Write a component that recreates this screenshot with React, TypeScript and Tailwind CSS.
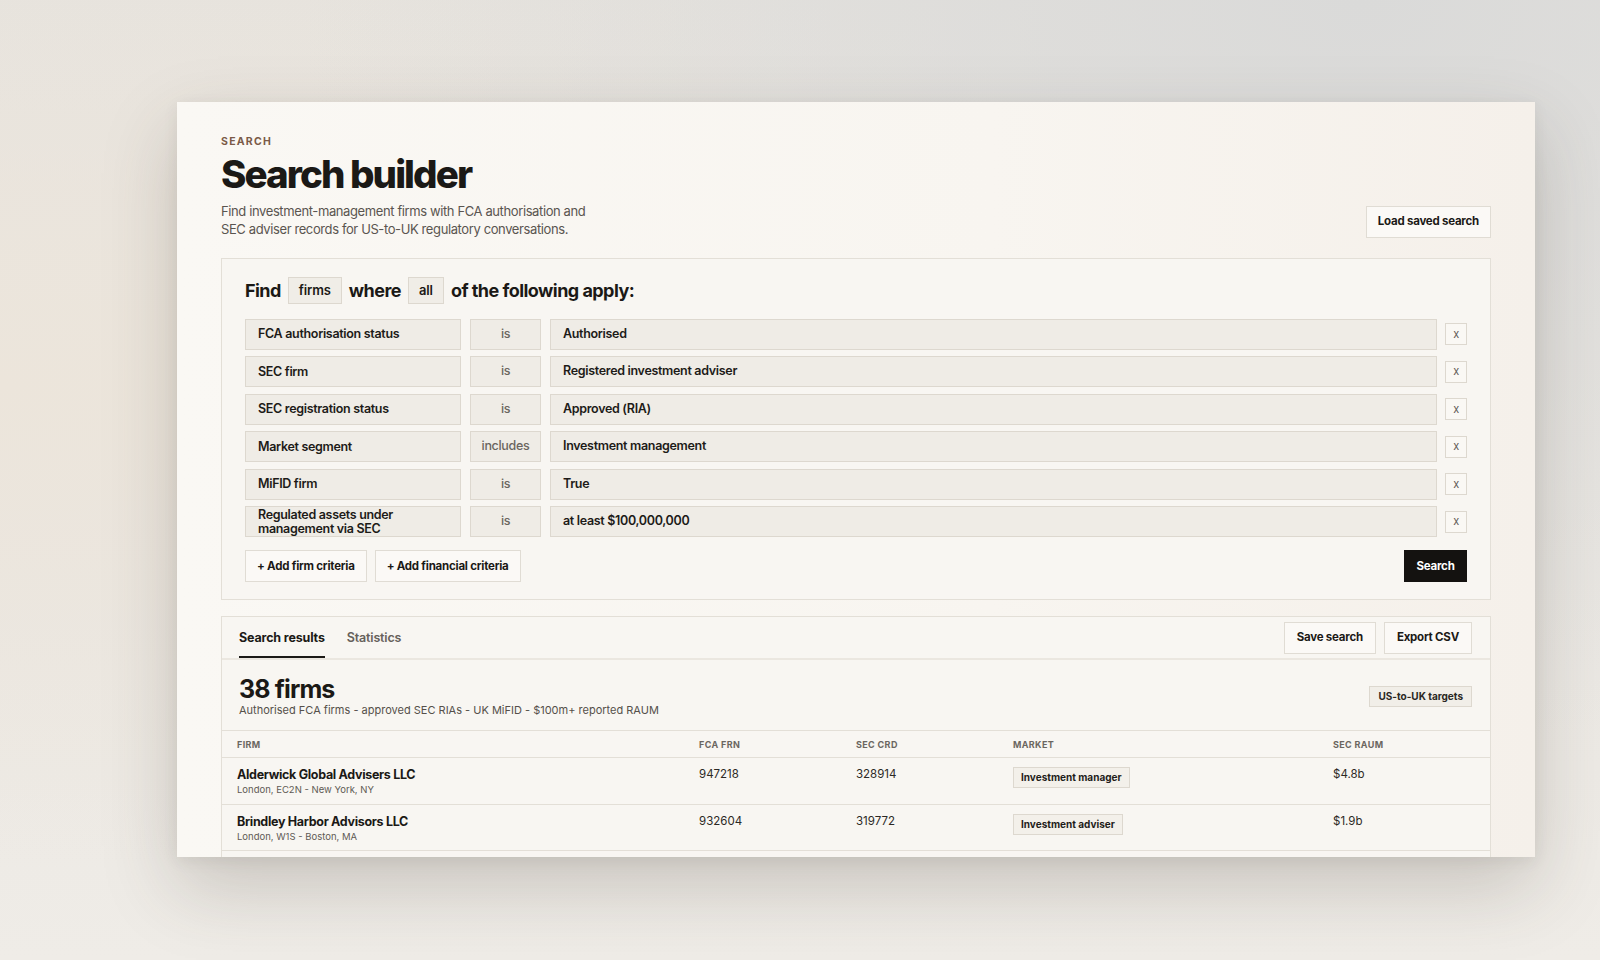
import React, { useState } from 'react';

type Criterion = { field: string; op: string; value: string };

const criteria: Criterion[] = [
  { field: 'FCA authorisation status', op: 'is', value: 'Authorised' },
  { field: 'SEC firm', op: 'is', value: 'Registered investment adviser' },
  { field: 'SEC registration status', op: 'is', value: 'Approved (RIA)' },
  { field: 'Market segment', op: 'includes', value: 'Investment management' },
  { field: 'MiFID firm', op: 'is', value: 'True' },
  { field: 'Regulated assets under management via SEC', op: 'is', value: 'at least $100,000,000' },
];

const firms = [
  { name: 'Alderwick Global Advisers LLC', place: 'London, EC2N - New York, NY', frn: '947218', crd: '328914', market: 'Investment manager', raum: '$4.8b' },
  { name: 'Brindley Harbor Advisors LLC', place: 'London, W1S - Boston, MA', frn: '932604', crd: '319772', market: 'Investment adviser', raum: '$1.9b' },
];

const cols = 'grid grid-cols-[462px_157px_157px_320px_1fr]';
const ghostBtn = 'h-[32px] px-[11px] bg-[#fbf9f6] border border-[#e0dcd4] text-[11.5px] font-bold tracking-[-0.02em] text-[#1b1916]';

function CriterionRow({ c }: { c: Criterion }) {
  return (
    <div className="flex items-center h-[31px] tracking-[-0.02em]">
      <div className="w-[216px] h-full flex items-center px-3 bg-[#efece6] border border-[#ddd8cf] text-[12.5px] leading-[14px] font-semibold text-[#1d1b18]">
        {c.field}
      </div>
      <div className="ml-[9px] w-[71px] h-full flex items-center justify-center bg-[#efece6] border border-[#ddd8cf] text-[12.5px] font-medium text-[#6a655e]">
        {c.op}
      </div>
      <div className="ml-[9px] flex-1 h-full flex items-center px-3 bg-[#efece6] border border-[#ddd8cf] text-[12.5px] font-semibold text-[#1d1b18]">
        {c.value}
      </div>
      <button className="ml-[8px] w-[22px] h-[22px] flex items-center justify-center bg-[#faf8f4] border border-[#ddd8cf] text-[11px] text-[#5f5a54] leading-none">
        x
      </button>
    </div>
  );
}

export default function App() {
  const [tab, setTab] = useState<'results' | 'stats'>('results');

  return (
    <div
      className="w-full h-[960px] overflow-hidden pt-[102px] pl-[177px] bg-[radial-gradient(ellipse_at_85%_0%,#dadad9_0%,transparent_55%),radial-gradient(ellipse_at_0%_40%,#ece5db_0%,transparent_60%),linear-gradient(180deg,#e6e3de_0%,#ebe8e3_60%,#efece7_100%)]"
      style={{ fontFamily: 'Inter, "Noto Sans", sans-serif' }}
    >
      <div className="w-[1358px] h-[755px] overflow-hidden bg-[linear-gradient(90deg,#faf8f4_0%,#f8f5f0_60%,#f5f0ea_100%)] shadow-[0_30px_70px_rgba(70,60,50,0.22),0_4px_14px_rgba(70,60,50,0.08)] px-[44px] pt-[32px]">
        {/* page header */}
        <div className="flex items-end justify-between">
          <div>
            <div className="text-[10.5px] font-bold tracking-[0.12em] text-[#7a5a47]">SEARCH</div>
            <h1 className="text-[38.5px] leading-[48px] font-extrabold tracking-[-0.05em] text-[#1b1916]">Search builder</h1>
            <p className="mt-[4px] text-[13px] leading-[18.5px] tracking-[-0.03em] text-[#5a5550] w-[380px]">
              Find investment-management firms with FCA authorisation and SEC adviser records for US-to-UK regulatory conversations.
            </p>
          </div>
          <button className={`mb-[1px] ${ghostBtn}`}>Load saved search</button>
        </div>

        {/* criteria builder */}
        <div className="mt-[19px] border border-[#e3dfd7] bg-[#f8f6f2] px-[23px] pt-[18px] pb-[17px]">
          <div className="flex items-center gap-[7px] text-[18px] font-bold tracking-[-0.03em] text-[#1b1916] h-[27px]">
            <span>Find</span>
            <span className="h-[27px] px-[10px] flex items-center bg-[#f0ede7] border border-[#ddd8cf] text-[13px] font-semibold tracking-[-0.01em]">firms</span>
            <span>where</span>
            <span className="h-[27px] px-[10px] flex items-center bg-[#f0ede7] border border-[#ddd8cf] text-[13px] font-semibold tracking-[-0.01em]">all</span>
            <span>of the following apply:</span>
          </div>

          <div className="mt-[15px] flex flex-col gap-[6.5px]">
            {criteria.map((c) => (
              <CriterionRow key={c.field} c={c} />
            ))}
          </div>

          <div className="mt-[13px] flex items-center">
            <button className={ghostBtn}>+ Add firm criteria</button>
            <button className={`ml-[8px] ${ghostBtn}`}>+ Add financial criteria</button>
            <button className="ml-auto h-[32px] w-[63px] bg-[#141210] text-white text-[11.5px] font-bold tracking-[-0.02em]">
              Search
            </button>
          </div>
        </div>

        {/* results */}
        <div className="mt-[16px] pb-[60px] border border-[#e3dfd7] bg-[#f8f6f2]">
          <div className="flex items-center justify-between h-[43px] border-b-2 border-[#ebe7e0] pl-[17px] pr-[18px]">
            <div className="flex h-full gap-[22px] tracking-[-0.01em]">
              <button
                onClick={() => setTab('results')}
                className={`h-full flex items-center pt-[3px] text-[12.5px] font-bold border-b-2 -mb-[2px] ${tab === 'results' ? 'border-[#1b1916] text-[#1b1916]' : 'border-transparent text-[#66615b]'}`}
              >
                Search results
              </button>
              <button
                onClick={() => setTab('stats')}
                className={`h-full flex items-center pt-[3px] text-[12.5px] font-semibold border-b-2 -mb-[2px] ${tab === 'stats' ? 'border-[#1b1916] text-[#1b1916]' : 'border-transparent text-[#66615b]'}`}
              >
                Statistics
              </button>
            </div>
            <div className="flex gap-[8px]">
              <button className={`${ghostBtn} px-[12px]`}>Save search</button>
              <button className={`${ghostBtn} px-[12px]`}>Export CSV</button>
            </div>
          </div>

          <div className="flex items-center justify-between pl-[17px] pr-[18px] pt-[15px] pb-[13px] border-b border-[#e3dfd7]">
            <div>
              <div className="text-[25px] leading-[28px] font-bold tracking-[-0.035em] text-[#1b1916]">38 firms</div>
              <div className="text-[11px] leading-[14px] text-[#55504a]">
                Authorised FCA firms - approved SEC RIAs - UK MiFID - $100m+ reported RAUM
              </div>
            </div>
            <span className="h-[21px] px-[8px] flex items-center bg-[#f1eee8] border border-[#ddd8cf] text-[10px] font-bold text-[#2a2723]">
              US-to-UK targets
            </span>
          </div>

          <div className={`${cols} h-[27px] items-center px-[15px] border-b border-[#e3dfd7] text-[9px] font-bold tracking-[0.04em] text-[#6b6660]`}>
            <span>FIRM</span>
            <span>FCA FRN</span>
            <span>SEC CRD</span>
            <span>MARKET</span>
            <span>SEC RAUM</span>
          </div>

          {firms.map((f) => (
            <div key={f.name} className={`${cols} h-[46.5px] pt-[9px] px-[15px] border-b border-[#e3dfd7] text-[11.5px] text-[#2c2925]`}>
              <div>
                <div className="text-[12.5px] leading-[15px] font-bold tracking-[-0.025em] text-[#1b1916]">{f.name}</div>
                <div className="mt-[2px] text-[9.5px] leading-[12px] text-[#5f5a54]">{f.place}</div>
              </div>
              <span className="leading-[14px]">{f.frn}</span>
              <span className="leading-[14px]">{f.crd}</span>
              <div>
                <span className="inline-flex items-center h-[21px] px-[7px] bg-[#f3f0ea] border border-[#ddd8cf] text-[10px] font-bold text-[#1f1d1a]">
                  {f.market}
                </span>
              </div>
              <span className="leading-[14px]">{f.raum}</span>
            </div>
          ))}
        </div>
      </div>
    </div>
  );
}
